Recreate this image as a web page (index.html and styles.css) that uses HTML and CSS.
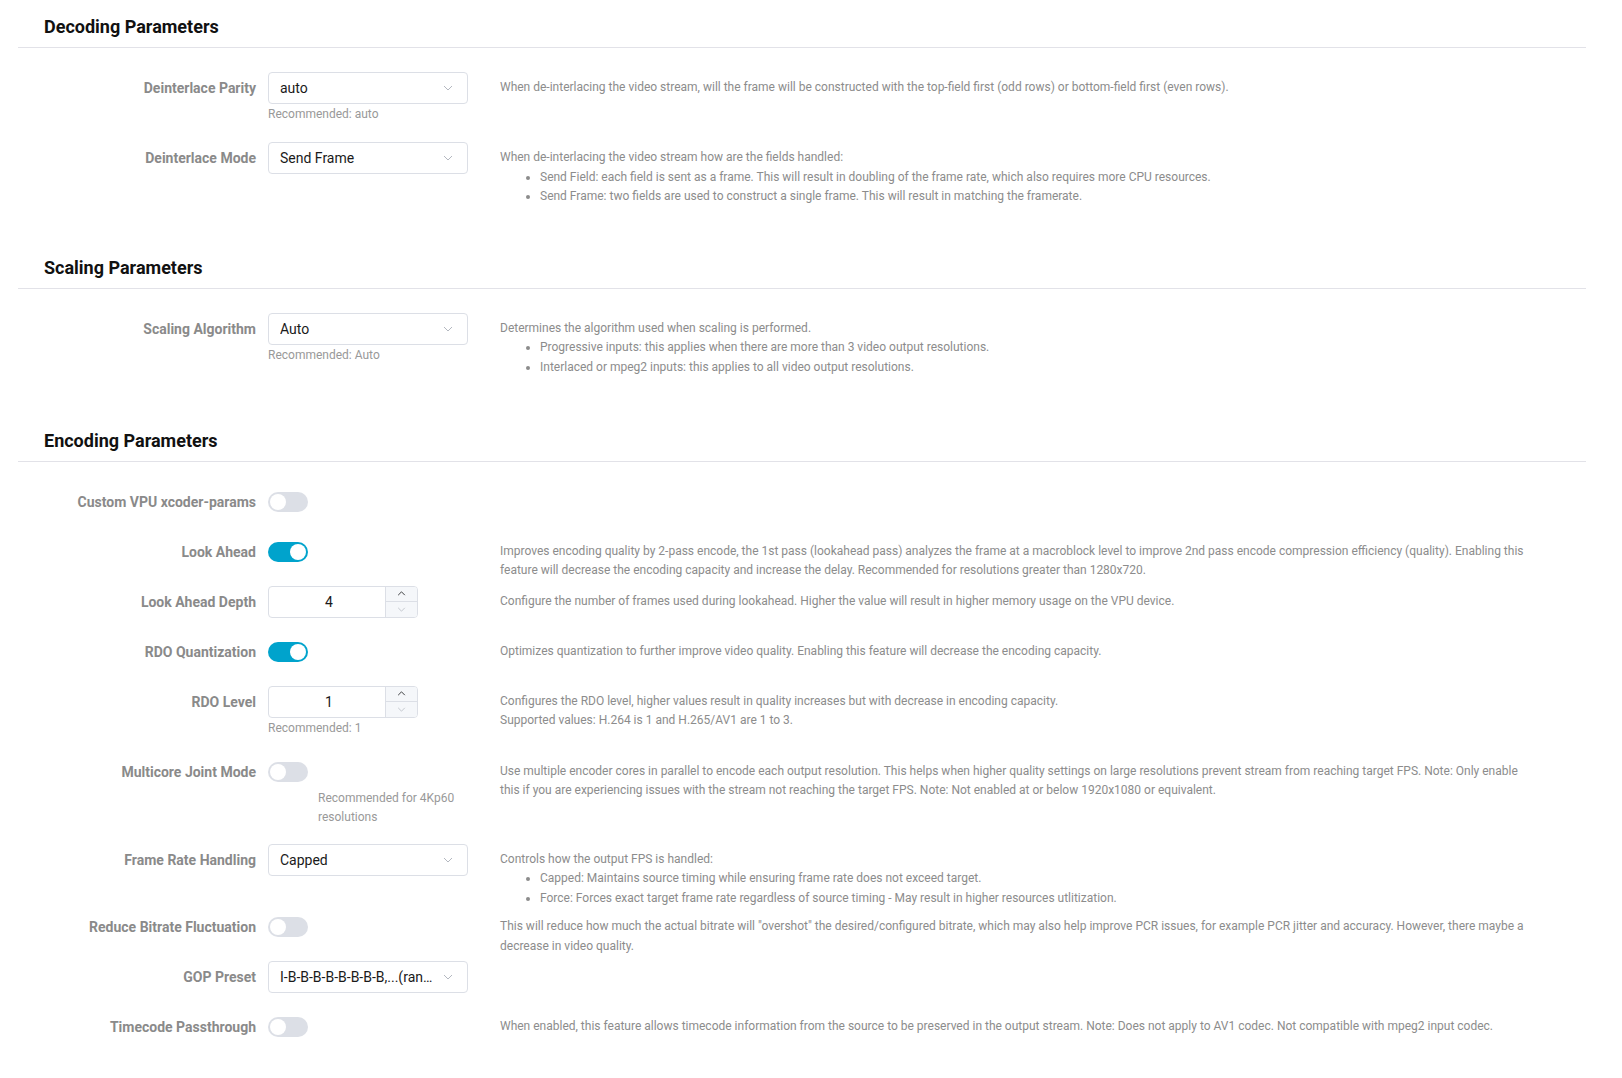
FILE: index.html
```html
<!DOCTYPE html>
<html lang="en">
<head>
<meta charset="utf-8">
<title>Parameters</title>
<link rel="stylesheet" href="styles.css">
</head>
<body>
<div class="page">

  <section class="section">
    <h2 class="section-title">Decoding Parameters</h2>
    <div class="rows">
      <div class="row">
        <div class="row-label">Deinterlace Parity</div>
        <div class="row-control">
          <div class="select"><span class="select-value">auto</span><svg class="chev" viewBox="0 0 10 6" width="10" height="6"><path d="M1 1l4 4 4-4"/></svg></div>
          <div class="hint">Recommended: auto</div>
        </div>
        <div class="row-desc">When de-interlacing the video stream, will the frame will be constructed with the top-field first (odd rows) or bottom-field first (even rows).</div>
      </div>
      <div class="row">
        <div class="row-label">Deinterlace Mode</div>
        <div class="row-control">
          <div class="select"><span class="select-value">Send Frame</span><svg class="chev" viewBox="0 0 10 6" width="10" height="6"><path d="M1 1l4 4 4-4"/></svg></div>
        </div>
        <div class="row-desc">When de-interlacing the video stream how are the fields handled:
          <ul>
            <li>Send Field: each field is sent as a frame. This will result in doubling of the frame rate, which also requires more CPU resources.</li>
            <li>Send Frame: two fields are used to construct a single frame. This will result in matching the framerate.</li>
          </ul>
        </div>
      </div>
    </div>
  </section>

  <section class="section">
    <h2 class="section-title">Scaling Parameters</h2>
    <div class="rows">
      <div class="row">
        <div class="row-label">Scaling Algorithm</div>
        <div class="row-control">
          <div class="select"><span class="select-value">Auto</span><svg class="chev" viewBox="0 0 10 6" width="10" height="6"><path d="M1 1l4 4 4-4"/></svg></div>
          <div class="hint">Recommended: Auto</div>
        </div>
        <div class="row-desc">Determines the algorithm used when scaling is performed.
          <ul>
            <li>Progressive inputs: this applies when there are more than 3 video output resolutions.</li>
            <li>Interlaced or mpeg2 inputs: this applies to all video output resolutions.</li>
          </ul>
        </div>
      </div>
    </div>
  </section>

  <section class="section">
    <h2 class="section-title">Encoding Parameters</h2>
    <div class="rows">
      <div class="row">
        <div class="row-label">Custom VPU xcoder-params</div>
        <div class="row-control">
          <div class="switch-line"><span class="switch"></span></div>
        </div>
      </div>
      <div class="row">
        <div class="row-label">Look Ahead</div>
        <div class="row-control">
          <div class="switch-line"><span class="switch is-on"></span></div>
        </div>
        <div class="row-desc">Improves encoding quality by 2-pass encode, the 1st pass (lookahead pass) analyzes the frame at a macroblock level to improve 2nd pass encode compression efficiency (quality). Enabling this feature will decrease the encoding capacity and increase the delay. Recommended for resolutions greater than 1280x720.</div>
      </div>
      <div class="row">
        <div class="row-label">Look Ahead Depth</div>
        <div class="row-control">
          <div class="number">
            <span class="number-value">4</span>
            <span class="number-spin">
              <span class="spin spin-up"><svg viewBox="0 0 10 6" width="9" height="5"><path d="M1 5l4-4 4 4"/></svg></span>
              <span class="spin spin-down"><svg viewBox="0 0 10 6" width="9" height="5"><path d="M1 1l4 4 4-4"/></svg></span>
            </span>
          </div>
        </div>
        <div class="row-desc">Configure the number of frames used during lookahead. Higher the value will result in higher memory usage on the VPU device.</div>
      </div>
      <div class="row">
        <div class="row-label">RDO Quantization</div>
        <div class="row-control">
          <div class="switch-line"><span class="switch is-on"></span></div>
        </div>
        <div class="row-desc">Optimizes quantization to further improve video quality. Enabling this feature will decrease the encoding capacity.</div>
      </div>
      <div class="row">
        <div class="row-label">RDO Level</div>
        <div class="row-control">
          <div class="number">
            <span class="number-value">1</span>
            <span class="number-spin">
              <span class="spin spin-up"><svg viewBox="0 0 10 6" width="9" height="5"><path d="M1 5l4-4 4 4"/></svg></span>
              <span class="spin spin-down"><svg viewBox="0 0 10 6" width="9" height="5"><path d="M1 1l4 4 4-4"/></svg></span>
            </span>
          </div>
          <div class="hint">Recommended: 1</div>
        </div>
        <div class="row-desc">Configures the RDO level, higher values result in quality increases but with decrease in encoding capacity.<br>Supported values: H.264 is 1 and H.265/AV1 are 1 to 3.</div>
      </div>
      <div class="row">
        <div class="row-label">Multicore Joint Mode</div>
        <div class="row-control">
          <div class="switch-line"><span class="switch"></span></div>
          <div class="hint hint-side">Recommended for 4Kp60 resolutions</div>
        </div>
        <div class="row-desc">Use multiple encoder cores in parallel to encode each output resolution. This helps when higher quality settings on large resolutions prevent stream from reaching target FPS. Note: Only enable this if you are experiencing issues with the stream not reaching the target FPS. Note: Not enabled at or below 1920x1080 or equivalent.</div>
      </div>
      <div class="row">
        <div class="row-label">Frame Rate Handling</div>
        <div class="row-control">
          <div class="select"><span class="select-value">Capped</span><svg class="chev" viewBox="0 0 10 6" width="10" height="6"><path d="M1 1l4 4 4-4"/></svg></div>
        </div>
        <div class="row-desc">Controls how the output FPS is handled:
          <ul>
            <li>Capped: Maintains source timing while ensuring frame rate does not exceed target.</li>
            <li>Force: Forces exact target frame rate regardless of source timing - May result in higher resources utlitization.</li>
          </ul>
        </div>
      </div>
      <div class="row">
        <div class="row-label">Reduce Bitrate Fluctuation</div>
        <div class="row-control">
          <div class="switch-line"><span class="switch"></span></div>
        </div>
        <div class="row-desc">This will reduce how much the actual bitrate will "overshot" the desired/configured bitrate, which may also help improve PCR issues, for example PCR jitter and accuracy. However, there maybe a decrease in video quality.</div>
      </div>
      <div class="row">
        <div class="row-label">GOP Preset</div>
        <div class="row-control">
          <div class="select"><span class="select-value">I-B-B-B-B-B-B-B-B,...(random access)</span><svg class="chev" viewBox="0 0 10 6" width="10" height="6"><path d="M1 1l4 4 4-4"/></svg></div>
        </div>
      </div>
      <div class="row">
        <div class="row-label">Timecode Passthrough</div>
        <div class="row-control">
          <div class="switch-line"><span class="switch"></span></div>
        </div>
        <div class="row-desc">When enabled, this feature allows timecode information from the source to be preserved in the output stream. Note: Does not apply to AV1 codec. Not compatible with mpeg2 input codec.</div>
      </div>
    </div>
  </section>

</div>
</body>
</html>
```

FILE: styles.css
```css
html, body {
  margin: 0;
  padding: 0;
  background: #ffffff;
}

body {
  font-family: Roboto, "Liberation Sans", Arial, sans-serif;
  color: #303133;
}

.page {
  padding: 15px 36px 0 18px;
}

.section + .section {
  margin-top: 46px;
}

.section-title {
  margin: 0 0 24px 0;
  padding: 0 0 8px 26px;
  font-size: 18px;
  line-height: 24px;
  font-weight: 700;
  color: #111111;
  border-bottom: 1px solid #e2e2e8;
}

.rows {
  display: flex;
  flex-direction: column;
}

.row {
  display: flex;
  align-items: flex-start;
  margin-bottom: 18px;
}

.row-label {
  width: 250px;
  flex-shrink: 0;
  box-sizing: border-box;
  padding-right: 12px;
  text-align: right;
  font-size: 14px;
  line-height: 32px;
  font-weight: 700;
  color: #8a8a8a;
}

.row-control {
  width: 200px;
  flex-shrink: 0;
}

.row-desc {
  width: 1040px;
  margin-left: 32px;
  padding-top: 6px;
  margin-bottom: -15px;
  font-size: 12px;
  line-height: 19.5px;
  color: #8c8c8c;
}

.row-desc ul {
  margin: 0;
  padding-left: 40px;
}

/* select */
.select {
  height: 32px;
  box-sizing: border-box;
  border: 1px solid #dcdfe6;
  border-radius: 4px;
  padding: 0 14px 0 11px;
  display: flex;
  align-items: center;
  justify-content: space-between;
  background: #fff;
}

.select-value {
  font-size: 14px;
  color: #1a1a1a;
  white-space: nowrap;
  overflow: hidden;
  text-overflow: ellipsis;
  min-width: 0;
  flex: 1;
  padding-right: 9px;
}

.chev {
  flex-shrink: 0;
  fill: none;
  stroke: #b4b8c0;
  stroke-width: 1;
}

/* hint */
.hint {
  font-size: 12px;
  line-height: 16px;
  padding-top: 2px;
  padding-bottom: 2px;
  color: #999999;
}

.hint-side {
  margin-left: 50px;
  width: 150px;
  line-height: 19px;
  padding-top: 1px;
  padding-bottom: 0;
  margin-bottom: -1px;
}

/* switch */
.switch-line {
  height: 32px;
  display: flex;
  align-items: center;
}

.switch {
  position: relative;
  width: 40px;
  height: 20px;
  border-radius: 10px;
  background: #dcdfe6;
  box-sizing: border-box;
}

.switch::after {
  content: "";
  position: absolute;
  top: 2px;
  left: 2px;
  width: 16px;
  height: 16px;
  border-radius: 50%;
  background: #ffffff;
}

.switch.is-on {
  background: #00a3cc;
}

.switch.is-on::after {
  left: 22px;
}

/* number input */
.number {
  width: 150px;
  height: 32px;
  box-sizing: border-box;
  border: 1px solid #dcdfe6;
  border-radius: 4px;
  display: flex;
  overflow: hidden;
}

.number-value {
  flex: 1;
  display: flex;
  align-items: center;
  justify-content: center;
  padding-left: 4px;
  font-size: 14px;
  color: #1a1a1a;
}

.number-spin {
  width: 31px;
  display: flex;
  flex-direction: column;
  border-left: 1px solid #dcdfe6;
  background: #f5f7fa;
}

.spin {
  flex: 1;
  display: flex;
  align-items: center;
  justify-content: center;
}

.spin-up {
  border-bottom: 1px solid #dcdfe6;
}

.spin svg {
  fill: none;
  stroke-width: 1.1;
}

.spin-up svg {
  stroke: #303133;
}

.spin-down svg {
  stroke: #c0c4cc;
}
```
